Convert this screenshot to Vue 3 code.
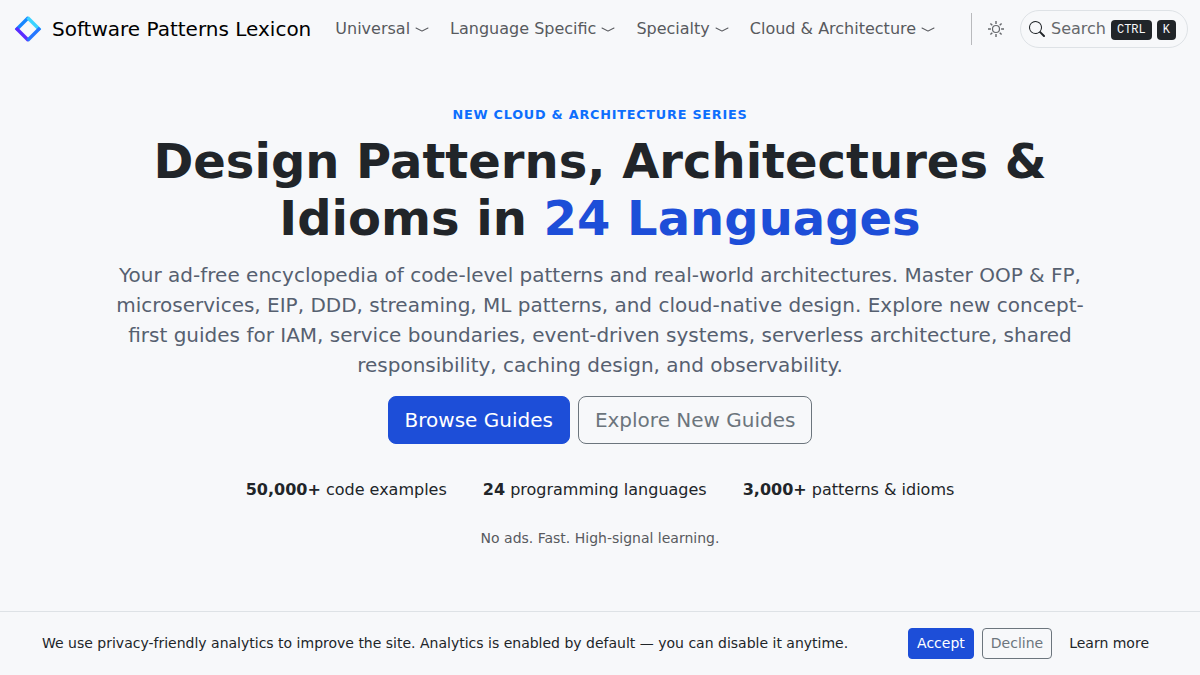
<template>
  <div class="page">
    <header class="navbar">
      <a class="brand" href="#">
        <svg class="brand-logo" viewBox="0 0 28 28" width="28" height="28" aria-hidden="true">
          <g fill="none" stroke-width="3.4">
            <path d="M2 15 L14.5 2.5" stroke="#1686ff" />
            <path d="M13.5 2.5 L26 15" stroke="#3bd3ff" />
            <path d="M2 13 L14.5 25.5" stroke="#5b2cff" />
            <path d="M13.5 25.5 L26 13" stroke="#2577ff" />
          </g>
        </svg>
        <span>Software Patterns Lexicon</span>
      </a>

      <nav class="nav-links">
        <a v-for="item in navItems" :key="item" class="nav-link" href="#">
          {{ item }}
          <svg class="icon" viewBox="0 0 16 16" width="16" height="16" fill="currentColor">
            <path d="M1.553 6.776a.5.5 0 0 1 .67-.223L8 9.44l5.776-2.888a.5.5 0 1 1 .448.894l-6 3a.5.5 0 0 1-.448 0l-6-3a.5.5 0 0 1-.223-.67" />
          </svg>
        </a>
      </nav>

      <div class="nav-tools">
        <span class="divider"></span>
        <button class="theme-btn" aria-label="Toggle theme">
          <svg class="icon" viewBox="0 0 16 16" width="16" height="16" fill="none" stroke="currentColor" stroke-width="1.2">
            <circle cx="8" cy="8" r="3.5" />
            <path stroke-width="1.4" d="M8 0v2.9M8 13.1v2.9M0 8h2.9M13.1 8h2.9M2.4 2.4l1.9 1.9M11.7 11.7l1.9 1.9M13.6 2.4l-1.9 1.9M4.3 11.7l-1.9 1.9" />
          </svg>
        </button>
        <button class="search">
          <svg class="search-icon" viewBox="0 0 16 16" width="16" height="16" fill="currentColor">
            <path d="M11.742 10.344a6.5 6.5 0 1 0-1.397 1.398h-.001q.044.06.098.115l3.85 3.85a1 1 0 0 0 1.415-1.414l-3.85-3.85a1 1 0 0 0-.115-.1zM12 6.5a5.5 5.5 0 1 1-11 0 5.5 5.5 0 0 1 11 0" />
          </svg>
          <span class="search-label">Search</span>
          <kbd>CTRL</kbd>
          <kbd>K</kbd>
        </button>
      </div>
    </header>

    <main class="hero">
      <p class="eyebrow">NEW CLOUD &amp; ARCHITECTURE SERIES</p>
      <h1>Design Patterns, Architectures &amp;<br>Idioms in <span class="accent">24 Languages</span></h1>
      <p class="lead">
        Your ad-free encyclopedia of code-level patterns and real-world architectures. Master OOP &amp; FP,
        microservices, EIP, DDD, streaming, ML patterns, and cloud-native design. Explore new concept-first
        guides for IAM, service boundaries, event-driven systems, serverless architecture, shared
        responsibility, caching design, and observability.
      </p>
      <div class="actions">
        <a class="btn btn-lg btn-primary" href="#">Browse Guides</a>
        <a class="btn btn-lg btn-outline" href="#">Explore New Guides</a>
      </div>
      <div class="stats">
        <span v-for="s in stats" :key="s.label"><strong>{{ s.value }}</strong> {{ s.label }}</span>
      </div>
      <p class="note">No ads. Fast. High-signal learning.</p>
    </main>

    <footer class="consent">
      <p>We use privacy-friendly analytics to improve the site. Analytics is enabled by default — you can disable it anytime.</p>
      <div class="consent-actions">
        <button class="btn btn-sm btn-primary">Accept</button>
        <button class="btn btn-sm btn-outline">Decline</button>
        <a class="btn btn-sm btn-link" href="#">Learn more</a>
      </div>
    </footer>
  </div>
</template>

<script setup>
const navItems = ['Universal', 'Language Specific', 'Specialty', 'Cloud & Architecture'];

const stats = [
  { value: '50,000+', label: 'code examples' },
  { value: '24', label: 'programming languages' },
  { value: '3,000+', label: 'patterns & idioms' },
];
</script>

<style>
body { margin: 0; background: #f7f8fa; }
</style>

<style scoped>
.page {
  height: 100vh; overflow: hidden;
  display: flex; flex-direction: column;
  background: #f7f8fa; color: #212529;
  font-family: "DejaVu Sans", sans-serif; font-size: 16px; line-height: 1.5;
}
.page *, .page *::before { box-sizing: border-box; }
a { color: inherit; text-decoration: none; }
button { font: inherit; margin: 0; }
p, h1 { margin: 0; }
.icon { display: block; flex-shrink: 0; }

/* Navbar */
.navbar {
  height: 58px; flex-shrink: 0; padding: 0 12px 0 14px;
  display: flex; align-items: center;
}
.brand {
  display: flex; align-items: center; gap: 10px;
  font-size: 20px; color: #000; white-space: nowrap;
}
.brand-logo { display: block; }
.nav-links { display: flex; gap: 20px; margin-left: 24px; }
.nav-link {
  display: flex; align-items: center; gap: 4px;
  color: #585a5e; white-space: nowrap;
}
.nav-tools { display: flex; align-items: center; margin-left: auto; }
.divider { width: 1px; height: 32px; background: #b9babd; }
.theme-btn {
  padding: 0; margin: 0 16px; border: 0; background: none; color: #66686c;
}
.search {
  height: 38px; width: 168px; padding: 0 8px;
  display: flex; align-items: center;
  border: 1px solid #dee2e6; border-radius: 19px; background: none;
}
.search-icon { color: #212529; flex-shrink: 0; }
.search-label { margin: 0 5px 0 6px; color: #66686c; }
kbd {
  height: 20px; padding: 0 6px; margin-top: 2px; border-radius: 4px;
  background: #212529; color: #f7f8fa;
  font: 12px/20px "Liberation Mono", monospace;
}
kbd + kbd { margin-left: 5px; }

/* Hero */
.hero {
  flex: 1; padding: 47px 0 0;
  display: flex; flex-direction: column; align-items: center;
  text-align: center;
}
.eyebrow {
  font-size: 12.8px; font-weight: 700; letter-spacing: .06em;
  line-height: 19.2px; color: #0d6efd;
}
h1 {
  margin-top: 8.7px;
  font-size: 48px; font-weight: 700; line-height: 57.6px;
}
.accent { color: #1d4ed8; }
.lead {
  width: 976px; margin-top: 12.1px;
  font-size: 20px; line-height: 30px; color: #566070;
}
.actions { display: flex; gap: 8px; margin-top: 16px; }
.stats { display: flex; gap: 36px; margin-top: 34px; }
.note { margin-top: 26px; font-size: 14px; line-height: 21px; color: #585a5e; }

/* Buttons */
.btn {
  display: inline-block; border: 1px solid transparent;
  background: none; white-space: nowrap; line-height: 1.5;
}
.btn-lg { padding: 8px 16px; font-size: 20px; border-radius: 8px; }
.btn-sm { padding: 4px 8px; font-size: 14px; border-radius: 4px; }
.btn-primary { background: #1d4ed8; border-color: #1d4ed8; color: #fff; }
.btn-outline { border-color: #6c757d; color: #6c757d; }

/* Consent bar */
.consent {
  height: 64px; flex-shrink: 0; padding: 0 42px;
  display: flex; align-items: center; justify-content: space-between;
  border-top: 1px solid #dee2e6; font-size: 14px;
}
.consent-actions { display: flex; gap: 8px; }
</style>
